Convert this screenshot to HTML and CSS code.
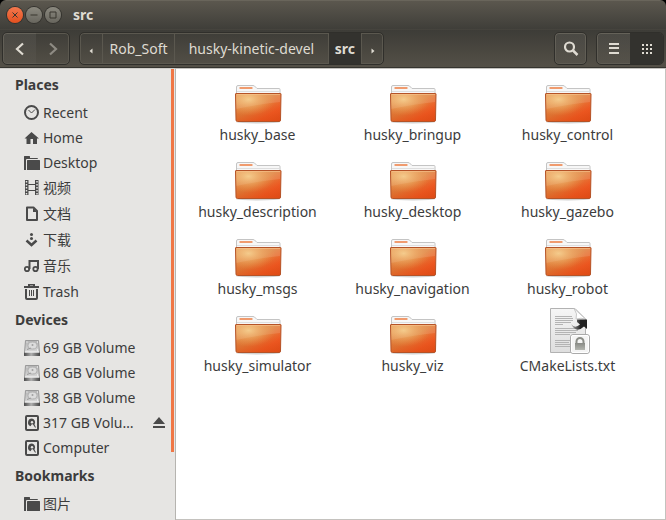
FILE: index.html
```html
<!DOCTYPE html>
<html lang="en">
<head>
<meta charset="utf-8">
<title>src</title>
<link rel="stylesheet" href="styles.css">
</head>
<body>
<svg class="defs" aria-hidden="true">
  <defs>
    <linearGradient id="g-folder" x1="0" y1="0" x2="1" y2="1">
      <stop offset="0" stop-color="#e59a58"/><stop offset=".45" stop-color="#e08440"/><stop offset=".75" stop-color="#f05a24"/><stop offset="1" stop-color="#e24c1a"/>
    </linearGradient>
    <radialGradient id="g-glow" cx=".28" cy=".2" r=".6">
      <stop offset="0" stop-color="#f8d898" stop-opacity=".8"/><stop offset="1" stop-color="#f0a050" stop-opacity="0"/>
    </radialGradient>
    <linearGradient id="g-shade" x1="0" y1="0" x2="0" y2="1">
      <stop offset=".3" stop-color="#d8480f" stop-opacity="0"/><stop offset="1" stop-color="#d8480f" stop-opacity=".45"/>
    </linearGradient>
    <linearGradient id="g-paper" x1="0" y1="0" x2="0" y2="1">
      <stop offset="0" stop-color="#f6f6f6"/><stop offset="1" stop-color="#dedede"/>
    </linearGradient>
    <linearGradient id="g-disk" x1="0" y1="0" x2="0" y2="1">
      <stop offset="0" stop-color="#b4b4b4"/><stop offset="1" stop-color="#e2e2e2"/>
    </linearGradient>
    <linearGradient id="g-rim" x1="0" y1="0" x2="1" y2="0">
      <stop offset="0" stop-color="#4a4a4a"/><stop offset=".45" stop-color="#b0b0b0"/><stop offset="1" stop-color="#444"/>
    </linearGradient>
    <linearGradient id="g-lock" x1="0" y1="0" x2="0" y2="1">
      <stop offset="0" stop-color="#888a85"/><stop offset="1" stop-color="#b4b6b0"/>
    </linearGradient>
    <linearGradient id="g-arrow" x1="0" y1="0" x2="1" y2="0">
      <stop offset="0" stop-color="#b0b0b0"/><stop offset=".6" stop-color="#222"/>
    </linearGradient>
  </defs>
  <symbol id="folder" viewBox="0 0 48 48">
    <ellipse cx="24" cy="46" rx="22" ry="1.500" fill="#000" opacity=".18"/>
    <path d="M2.500 20V11q0-1.500 1.500-1.500H19q1.500 0 2.500 1.500l1.500 1.500H45q1 0 1 1V20z" fill="#f7f7f7" stroke="#c4c4c4"/>
    <path d="M3 15.500H46" stroke="#dedede"/>
    <rect x="5.500" y="11" width="13" height="2" rx=".5" fill="#f09b6e"/>
    <path d="M1.500 18q0-.5.5-.5H46.500q.5 0 .5.500L46.500 44q0 1.500-1.500 1.500H3.500Q2 45.500 2 44z" fill="url(#g-folder)"/>
    <path d="M2 18H47L46.500 45H2z" fill="url(#g-shade)"/>
    <path d="M2 18H47L46 26Q26 28 2 33z" fill="#fff" opacity=".12"/>
    <path d="M2 18H47V45H2z" fill="url(#g-glow)"/>
    <path d="M1.500 18q0-.5.500-.5H46.500q.5 0 .5.500L46.500 44q0 1.500-1.500 1.500H3.500Q2 45.500 2 44z" fill="none" stroke="#b55327"/>
    <path d="M3 18.500H46" stroke="#f8c690" opacity=".6"/>
  </symbol>
  <symbol id="textfile" viewBox="0 0 48 48">
    <path d="M6.500 1.500H31L41.500 12V45.500H6.500z" fill="url(#g-paper)" stroke="#b2b2b2"/>
    <path d="M30 1.500Q34 7 32 12 37 10.500 41.500 12z" fill="#fff" stroke="#c8c8c8"/>
    <path d="M11 9.500H28M11 11.500H29M11 13.500H29M11 15.500H27M11 17.500H19M11 21.500H35M11 23.500H34M11 25.500H32M11 27.500H26M11 33.500H26M11 35.500H25M11 37.500H26M11 39.500H26" stroke="#b4b4b4"/>
    <path d="M27 17q4 5 9 .5L33 15V12.500H43V22l-3-2.500Q32 27 27 17z" fill="url(#g-arrow)"/>
    <rect x="26.500" y="27.500" width="19" height="19" rx="2.500" fill="#f4f4f4" stroke="#aaa"/>
    <rect x="27.500" y="28.500" width="17" height="17" rx="1.500" fill="none" stroke="#fff"/>
    <path d="M32.500 37V34.500a3.500 3.500 0 0 1 7 0V37" fill="none" stroke="#8c8e88" stroke-width="2"/>
    <rect x="31" y="36" width="10" height="7" fill="url(#g-lock)"/>
  </symbol>
  <symbol id="disk" viewBox="0 0 16 16">
    <path d="M1.500 .5H14.500L15.500 12.500V15.500H.5V12.500z" fill="url(#g-disk)" stroke="#999"/>
    <rect x="0" y="12.500" width="16" height="3.500" rx=".5" fill="url(#g-rim)"/>
    <path d="M1 12H15" stroke="#f6f6f6"/>
    <ellipse cx="8.500" cy="5.500" rx="4.500" ry="3.500" fill="#dcdcdc" stroke="#b0b0b0"/>
    <circle cx="8.500" cy="5" r="1" fill="#a0a0a0"/>
    <path d="M3 9.500L7 8" stroke="#999"/><path d="M2.500 2h1M13 2h1M13 10h1" stroke="#fff"/>
  </symbol>
  <symbol id="drive" viewBox="0 0 16 16">
    <rect x="2" y="1" width="12" height="14" rx="1" fill="none" stroke="#4a4a4a" stroke-width="2"/>
    <path d="M8 3.500a4 4 0 0 0-1.500 7.700L8 9l1 .5 2 3h1l-1.500-3A4 4 0 0 0 8 3.500z" fill="#4a4a4a"/>
    <circle cx="8" cy="7.300" r="1.200" fill="#e6e5e3"/>
  </symbol>
  <symbol id="dir" viewBox="0 0 16 16">
    <path d="M0 1.500q0-.5.500-.5H5.500l.5.500V3h7.500l.5 1H3q-1 0-1 1V15H.5q-.5 0-.5-.5z" fill="#4a4a4a"/>
    <path d="M3 5.500q0-.5.500-.5H15.500q.5 0 .5.500v9q0 .5-.5.500H3z" fill="#4a4a4a"/>
  </symbol>
</svg>

<div class="window">
  <header class="chrome">
    <div class="titlebar">
      <div class="controls">
        <button class="ctl close" aria-label="Close"><svg viewBox="0 0 16 16"><path d="M5.500 5.500l5 5M10.500 5.500l-5 5"/></svg></button>
        <button class="ctl" aria-label="Minimize"><svg viewBox="0 0 16 16"><path d="M4.500 8h7"/></svg></button>
        <button class="ctl" aria-label="Maximize"><svg viewBox="0 0 16 16"><path d="M5 5h6v6H5z"/></svg></button>
      </div>
      <h1 class="title">src</h1>
    </div>
    <div class="toolbar">
      <div class="group">
        <button class="tool raised" aria-label="Back"><svg class="glyph" viewBox="0 0 16 16"><path d="M11 2.500L5 8l6 5.500" fill="none" stroke="#dfdbd2" stroke-width="2.200"/></svg></button>
        <button class="tool" aria-label="Forward" disabled><svg class="glyph" viewBox="0 0 16 16"><path d="M5 2.500L11 8l-6 5.500" fill="none" stroke="#8e8b83" stroke-width="2.200"/></svg></button>
      </div>
      <nav class="group path" aria-label="Location">
        <button class="step" aria-label="Scroll left"><svg class="tick" viewBox="0 0 6 6"><path d="M4.500 .5v5L1.500 3z"/></svg></button>
        <button class="crumb">Rob_Soft</button>
        <button class="crumb wide">husky-kinetic-devel</button>
        <button class="crumb current">src</button>
        <button class="step" aria-label="Scroll right"><svg class="tick" viewBox="0 0 6 6"><path d="M1.500 .5v5l3-2.500z"/></svg></button>
      </nav>
      <div class="group search">
        <button class="tool raised" aria-label="Search"><svg class="glyph" viewBox="0 0 16 16"><circle cx="6.500" cy="6" r="4.500" fill="none" stroke="#dfdbd2" stroke-width="2.200"/><path d="M10 9.500l4.500 4.500" stroke="#dfdbd2" stroke-width="2.500"/></svg></button>
      </div>
      <div class="group">
        <button class="tool raised" aria-label="List view"><svg class="glyph" viewBox="0 0 16 16"><path d="M3 3h10M3 7h10M3 12h10" stroke="#dfdbd2" stroke-width="2"/></svg></button>
        <button class="tool pressed" aria-label="Icon view"><svg class="glyph" viewBox="0 0 16 16"><path d="M3 4h10M3 8h10M3 12h10" stroke="#dfdbd2" stroke-width="2" stroke-dasharray="2 2"/></svg></button>
      </div>
    </div>
  </header>

  <div class="body">
    <aside class="sidebar">
      <h2>Places</h2>
      <ul>
        <li><a href="#"><svg class="icon" viewBox="0 0 16 16"><circle cx="7.500" cy="7.500" r="6.500" fill="none" stroke="#4a4a4a" stroke-width="2"/><path d="M4.500 5l3 3 3.500-3.500" fill="none" stroke="#4a4a4a" stroke-width="1"/></svg>Recent</a></li>
        <li><a href="#"><svg class="icon" viewBox="0 0 16 16"><path d="M7.500 2L15 8.500H13V14H9V9H6.500V14H2.500V8.500H.5z" fill="#4a4a4a"/></svg>Home</a></li>
        <li><a href="#"><svg class="icon"><use href="#dir"/></svg>Desktop</a></li>
        <li class="cjk"><a href="#"><svg class="icon" viewBox="0 0 16 16"><path d="M4 4.500h8M4 10.500h8" stroke="#4a4a4a" stroke-width="1"/><path d="M1 0h3.500v15H1zM11 0h3.500v15H11z" fill="#4a4a4a"/><path d="M2.500 1v14M13 1v14" stroke="#e6e5e3" stroke-width="1.500" stroke-dasharray="1.500 1.500"/></svg>视频</a></li>
        <li class="cjk"><a href="#"><svg class="icon" viewBox="0 0 16 16"><path d="M3 1.500H9.500L13 5V14H3z" fill="none" stroke="#4a4a4a" stroke-width="2" stroke-linejoin="round"/><path d="M9 2v4h4z" fill="#4a4a4a"/></svg>文档</a></li>
        <li class="cjk"><a href="#"><svg class="icon" viewBox="0 0 16 16"><circle cx="7.500" cy="2.500" r="1.500" fill="#4a4a4a"/><circle cx="7.500" cy="6.500" r="1.500" fill="#4a4a4a"/><path d="M2.500 8.500l5 4.500 5-4.500" fill="none" stroke="#4a4a4a" stroke-width="2.500"/></svg>下载</a></li>
        <li class="cjk"><a href="#"><svg class="icon" viewBox="0 0 16 16"><circle cx="3" cy="11" r="2.200" fill="none" stroke="#4a4a4a" stroke-width="1.800"/><circle cx="11.500" cy="11" r="2.200" fill="none" stroke="#4a4a4a" stroke-width="1.800"/><path d="M5.500 11V3H14V11" fill="none" stroke="#4a4a4a" stroke-width="2"/></svg>音乐</a></li>
        <li><a href="#"><svg class="icon" viewBox="0 0 16 16"><path d="M0 3h15M5 2V.5h5V2" fill="none" stroke="#4a4a4a" stroke-width="2"/><path d="M2 5V14q0 1 1 1h9q1 0 1-1V5" fill="none" stroke="#4a4a4a" stroke-width="2"/><path d="M5.500 6v6M7.500 6v6M9.500 6v6" stroke="#4a4a4a" stroke-width="1"/></svg>Trash</a></li>
      </ul>
      <h2>Devices</h2>
      <ul>
        <li><a href="#"><svg class="icon"><use href="#disk"/></svg>69 GB Volume</a></li>
        <li><a href="#"><svg class="icon"><use href="#disk"/></svg>68 GB Volume</a></li>
        <li><a href="#"><svg class="icon"><use href="#disk"/></svg>38 GB Volume</a></li>
        <li><a href="#"><svg class="icon"><use href="#drive"/></svg>317 GB Volu…</a><button class="eject" aria-label="Eject"><svg viewBox="0 0 12 12"><path d="M6 0L12 7H0zM0 9h12v2H0z" fill="#4a4a4a"/></svg></button></li>
        <li><a href="#"><svg class="icon"><use href="#drive"/></svg>Computer</a></li>
      </ul>
      <h2>Bookmarks</h2>
      <ul>
        <li class="cjk"><a href="#"><svg class="icon"><use href="#dir"/></svg>图片</a></li>
      </ul>
      <div class="thumb"></div>
    </aside>

    <main class="files">
      <a class="file" href="#"><svg><use href="#folder"/></svg>husky_base</a>
      <a class="file" href="#"><svg><use href="#folder"/></svg>husky_bringup</a>
      <a class="file" href="#"><svg><use href="#folder"/></svg>husky_control</a>
      <a class="file" href="#"><svg><use href="#folder"/></svg>husky_description</a>
      <a class="file" href="#"><svg><use href="#folder"/></svg>husky_desktop</a>
      <a class="file" href="#"><svg><use href="#folder"/></svg>husky_gazebo</a>
      <a class="file" href="#"><svg><use href="#folder"/></svg>husky_msgs</a>
      <a class="file" href="#"><svg><use href="#folder"/></svg>husky_navigation</a>
      <a class="file" href="#"><svg><use href="#folder"/></svg>husky_robot</a>
      <a class="file" href="#"><svg><use href="#folder"/></svg>husky_simulator</a>
      <a class="file" href="#"><svg><use href="#folder"/></svg>husky_viz</a>
      <a class="file" href="#"><svg><use href="#textfile"/></svg>CMakeLists.txt</a>
    </main>
  </div>
</div>
</body>
</html>
```
FILE: styles.css
```css
* { box-sizing: border-box; }

body {
  margin: 0;
  background: #000;
  color: #3c3c3c;
  font: 14px/20px "Noto Sans", "Noto Sans CJK SC", sans-serif;
}

button {
  margin: 0;
  padding: 0;
  border: 0;
  background: none;
  color: inherit;
  font: inherit;
}

a { color: inherit; text-decoration: none; }

.defs { position: absolute; width: 0; height: 0; }

.window {
  display: flex;
  flex-direction: column;
  height: 100vh;
  overflow: hidden;
  border-radius: 6px 6px 0 0;
}

.chrome {
  color: #dfdbd2;
  border-bottom: 1px solid #35342f;
}

.titlebar {
  display: flex;
  align-items: center;
  gap: 12px;
  height: 29px;
  padding: 0 7px;
  background: linear-gradient(#5b574e, #3f3e39);
  border-top: 1px solid #69655b;
}

.controls { display: flex; gap: 3px; }

.ctl {
  width: 16px;
  height: 16px;
  border-radius: 50%;
  background: linear-gradient(#8b897f, #68665e);
  box-shadow: 0 0 0 1px #34332e;
}

.ctl.close { background: linear-gradient(#f4784e, #e4501f); }
.ctl svg { display: block; fill: none; stroke: #38362f; stroke-width: 1; }

.title { margin: 0; font-size: 14px; font-weight: 700; }

.toolbar {
  display: flex;
  align-items: center;
  gap: 9px;
  height: 38px;
  padding: 0 2px;
  background: linear-gradient(#3d3c37, #545047);
  border-top: 1px solid #45433d;
}

.group {
  display: flex;
  height: 33px;
  border: 1px solid #302f2b;
  border-radius: 5px;
  overflow: hidden;
  box-shadow: inset 0 0 0 1px #5b584f;
}

.search { margin-left: auto; }

.tool {
  display: flex;
  align-items: center;
  justify-content: center;
  width: 33px;
}

.search .tool { width: 31px; }
.raised { background: linear-gradient(#ffffff0f, #ffffff05); }
.pressed { background: #33322e; }
.glyph { width: 16px; height: 16px; }

.crumb {
  min-width: 33px;
  padding: 0 6px;
  border-left: 1px solid #5b584f;
}

.crumb:not(.current) { flex-grow: 1; }
.crumb.wide { padding: 0 13px; }
.crumb.current { background: #33322e; font-weight: 700; }
.path { min-width: 305px; }
.step { width: 22px; border-left: 1px solid #5b584f; }
.step:first-child { border-left: 0; }
.tick { width: 6px; height: 6px; fill: #dfdbd2; }

.body { display: flex; flex: 1; min-height: 0; }

.sidebar {
  position: relative;
  flex: 0 0 176px;
  overflow: hidden;
  background: #e6e5e3;
  border-top: 1px solid #cfcdc9;
  border-right: 1px solid #b6b4b0;
}

.sidebar h2 {
  margin: 0;
  padding-left: 15px;
  font-size: 14px;
  font-weight: 700;
  line-height: 31px;
}

.sidebar ul { margin: 0; padding: 0; list-style: none; }

.sidebar li {
  display: flex;
  align-items: center;
  justify-content: space-between;
  height: 25px;
  padding: 0 10px 0 24px;
}

.sidebar li.cjk { height: 26px; }
.sidebar a { display: flex; align-items: center; gap: 3px; white-space: nowrap; }
.icon { width: 16px; height: 16px; }
.eject svg { display: block; width: 12px; height: 12px; }

.thumb {
  position: absolute;
  top: 0;
  right: 1px;
  width: 3px;
  height: 85%;
  background: #f07746;
}

.files {
  display: grid;
  flex: 1;
  grid-template-columns: repeat(auto-fill, 155px);
  align-content: start;
  row-gap: 7px;
  padding: 7px 0 0 4px;
  background: #fff;
  border: 1px solid #c4c2be;
  border-left: 0;
}

.file {
  display: flex;
  flex-direction: column;
  align-items: center;
  gap: 1px;
  height: 70px;
}

.file svg { width: 48px; height: 48px; }
```
